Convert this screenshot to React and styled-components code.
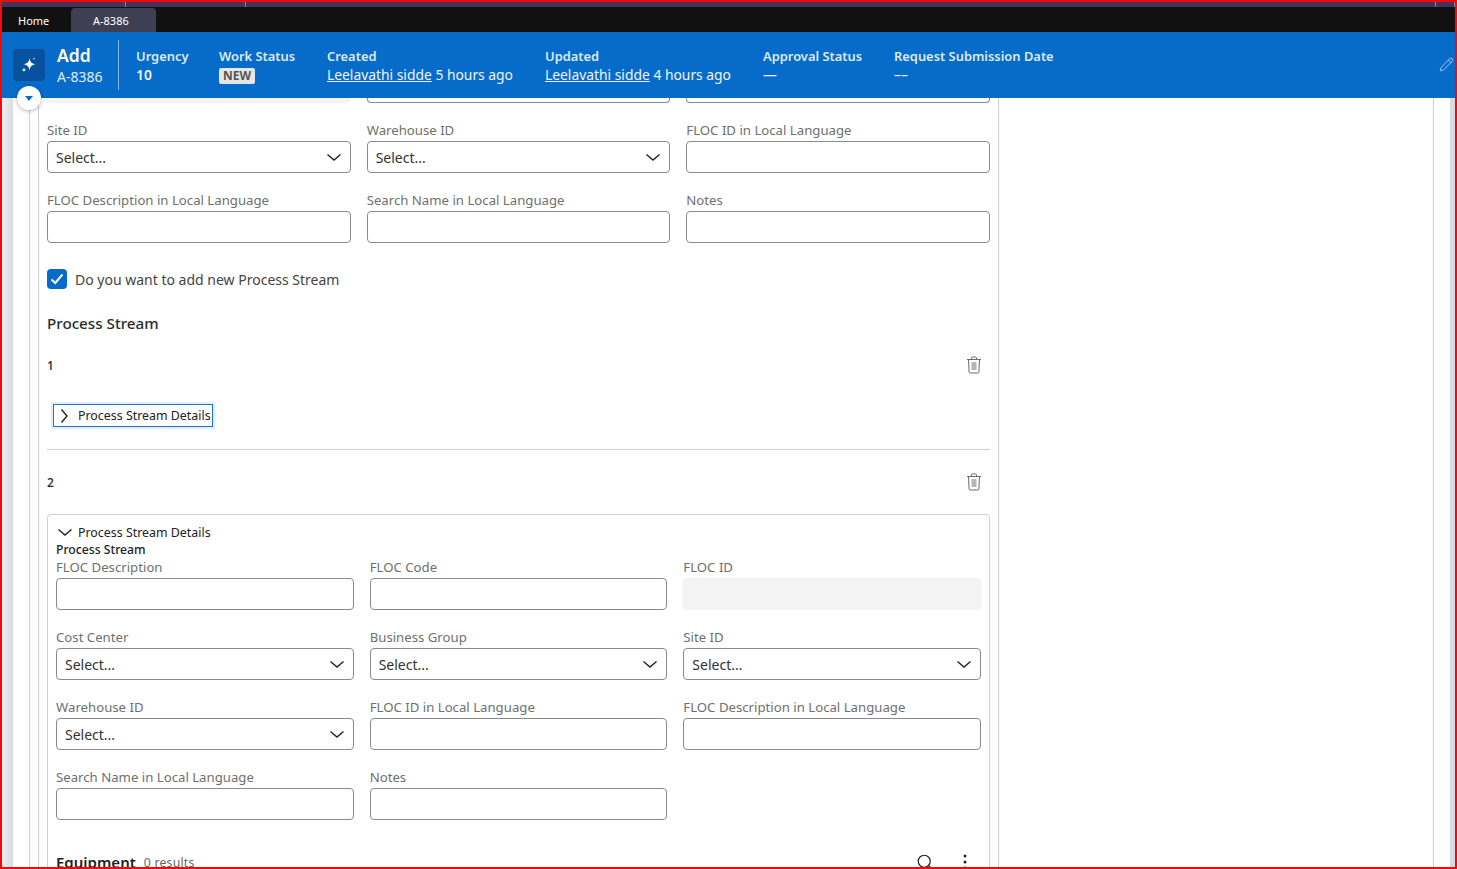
import React from 'react';
import styled, { createGlobalStyle } from 'styled-components';
import { Pencil, Search } from 'lucide-react';

const GlobalStyle = createGlobalStyle`
  html, body {
    margin: 0;
    padding: 0;
    overflow: hidden;
    background: #fff;
    font-family: "Noto Sans", "Open Sans", sans-serif;
  }
  * {
    box-sizing: border-box;
  }
`;

const Frame = styled.div`
  position: relative;
  width: 1457px;
  height: 869px;
  border: 2px solid #f00a0a;
  overflow: hidden;
  display: flex;
  flex-direction: column;
`;

const TopStrip = styled.div`
  flex: none;
  height: 5px;
  background: #43325a;
  display: flex;
  justify-content: space-between;
`;

const TickGroup = styled.div`
  display: flex;
`;

const Tick = styled.span`
  width: ${props => props.$w}px;
  border-right: 1px solid #8f8699;
`;

const TabBar = styled.div`
  flex: none;
  height: 25px;
  background: #111111;
  display: flex;
  align-items: flex-end;
  color: #fff;
  font-size: 11px;
`;

const Tab = styled.div`
  height: 24px;
  display: flex;
  align-items: center;
  width: ${props => props.$w}px;
  padding-left: ${props => props.$pl}px;
  border-radius: 4px 4px 0 0;
  background: ${props => (props.$active ? '#3f3f54' : 'transparent')};
  margin-left: ${props => props.$ml || 0}px;
`;

const Header = styled.div`
  position: relative;
  z-index: 2;
  flex: none;
  height: 66px;
  background: #076bc9;
  display: flex;
  align-items: center;
  padding-left: 11px;
  color: #fff;
`;

const IconTile = styled.div`
  width: 32px;
  height: 32px;
  border-radius: 4px;
  background: #07529f;
  display: flex;
  align-items: center;
  justify-content: center;
`;

const TitleBlock = styled.div`
  margin-left: 12px;
  width: 61px;
  display: flex;
  flex-direction: column;
`;

const Title = styled.div`
  font-size: 17.5px;
  font-weight: 600;
  line-height: 24px;
`;

const SubTitle = styled.div`
  font-size: 14px;
  line-height: 20px;
  color: #e3eefa;
`;

const Separator = styled.div`
  width: 1px;
  height: 50px;
  background: #8dbbe6;
`;

const MetaRow = styled.div`
  display: flex;
  gap: 32px;
  margin-left: 17px;
  padding-top: 2px;
`;

const Meta = styled.div`
  display: flex;
  flex-direction: column;
  white-space: nowrap;
  width: ${props => (props.$w ? `${props.$w}px` : 'auto')};
`;

const MetaLabel = styled.div`
  font-size: 12.9px;
  font-weight: 600;
  line-height: 18px;
  color: #dceafa;
`;

const MetaValue = styled.div`
  font-size: 13.85px;
  line-height: 20px;
  color: #eef5fd;
  font-weight: ${props => (props.$bold ? 600 : 400)};
`;

const UserLink = styled.span`
  text-decoration: underline;
`;

const Badge = styled.span`
  display: inline-block;
  background: #e6e6e6;
  color: #555;
  font-size: 12px;
  font-weight: 700;
  line-height: 16px;
  padding: 0 4px;
  border-radius: 2px;
`;

const EditButton = styled.div`
  position: absolute;
  right: 1px;
  top: 25px;
  color: #cfe2f6;
  display: flex;
`;

const Toggle = styled.div`
  position: absolute;
  z-index: 3;
  left: 15px;
  top: 84px;
  width: 24px;
  height: 24px;
  border-radius: 50%;
  background: #fff;
  box-shadow: 0 1px 4px rgba(0, 0, 0, 0.3);
  display: flex;
  align-items: center;
  justify-content: center;

  &::after {
    content: '';
    margin-top: 1px;
    border-left: 4px solid transparent;
    border-right: 4px solid transparent;
    border-top: 5px solid #076bc9;
  }
`;

const Page = styled.div`
  flex: 1;
  min-height: 0;
  display: flex;
  overflow: hidden;
  background: linear-gradient(90deg, #eceef1 0, #d6dce1 11px, #d6dce1 100%);
  padding: 0 5px 0 11px;
`;

const Panel = styled.div`
  flex: 1;
  background: #fff;
  padding: 0 16px;
  display: flex;
`;

const PanelInner = styled.div`
  flex: 1;
  border-left: 1px solid #cfcfcf;
  border-right: 1px solid #cfcfcf;
  padding-left: 8px;
  display: flex;
`;

const FormColumn = styled.div`
  width: 961px;
  flex: none;
  border-left: 1px solid #cfcfcf;
  border-right: 1px solid #cfcfcf;
  padding: 0 8px;
`;

const ClippedRow = styled.div`
  height: 5px;
  overflow: hidden;
  display: grid;
  grid-template-columns: repeat(3, 1fr);
  column-gap: 16px;
  align-items: end;
  margin-bottom: 17px;
`;

const ClippedField = styled.div`
  height: 5px;
  border-radius: 0 0 4px 4px;
  background: ${props => (props.$disabled ? '#f3f3f3' : '#fff')};
  border: ${props => (props.$disabled ? 'none' : '1px solid #8a8a8a')};
  border-top: none;
`;

const FieldGrid = styled.div`
  display: grid;
  grid-template-columns: repeat(3, 1fr);
  column-gap: 16px;
  row-gap: 17px;
`;

const Field = styled.div`
  display: flex;
  flex-direction: column;
  min-width: 0;
`;

const Label = styled.label`
  font-size: 13.2px;
  line-height: 20px;
  height: 21px;
  color: #6f6f6f;
  white-space: nowrap;
`;

const InputBox = styled.div`
  height: 32px;
  border-radius: 4px;
  border: ${props => (props.$disabled ? 'none' : '1px solid #8a8a8a')};
  background: ${props => (props.$disabled ? '#f3f3f3' : '#fff')};
  display: flex;
  align-items: center;
  justify-content: space-between;
  padding: 0 8px;
  font-size: 14px;
  color: #333;
`;

const CheckRow = styled.div`
  display: flex;
  align-items: center;
  gap: 8px;
  margin-top: 26px;
  font-size: 14px;
  color: #444;
`;

const CheckBox = styled.div`
  width: 20px;
  height: 20px;
  border-radius: 4px;
  background: #076bc9;
  display: flex;
  align-items: center;
  justify-content: center;
`;

const SectionTitle = styled.div`
  font-size: 15.2px;
  font-weight: 500;
  line-height: 22px;
  color: #2b2b2b;
  margin-top: 23px;
`;

const StreamRow = styled.div`
  height: 24px;
  display: flex;
  align-items: center;
  justify-content: space-between;
  padding-right: 8px;
  font-size: 12px;
  font-weight: 500;
  color: #222;
  margin-top: ${props => props.$mt}px;
`;

const DetailsButton = styled.div`
  width: 160px;
  height: 23px;
  margin: 27px 0 0 6px;
  display: flex;
  align-items: center;
  border: 1px solid #1b74d3;
  outline: 2px solid #e3eef9;
  font-size: 12.4px;
  color: #222;
  white-space: nowrap;
  padding-left: 2px;
  gap: 6px;
`;

const Divider = styled.div`
  height: 1px;
  background: #cfcfcf;
  margin-top: 22px;
`;

const DetailsCard = styled.div`
  margin-top: 20px;
  border: 1px solid #cfcfcf;
  border-radius: 4px;
  padding: 8px 8px 0;
`;

const DetailsHead = styled.div`
  display: flex;
  align-items: center;
  gap: 5px;
  height: 18px;
  font-size: 12.4px;
  color: #222;
  margin-left: 1px;
`;

const DetailsTitle = styled.div`
  font-size: 12.2px;
  line-height: 15px;
  padding-top: 1px;
  font-weight: 500;
  color: #222;
`;

const EquipmentRow = styled.div`
  display: flex;
  align-items: center;
  height: 24px;
  margin-top: 30px;
`;

const EquipmentTitle = styled.div`
  font-size: 15px;
  font-weight: 600;
  color: #222;
`;

const ResultCount = styled.div`
  font-size: 12.3px;
  color: #666;
  margin-left: 8px;
  letter-spacing: 0.2px;
`;

const EquipmentTools = styled.div`
  margin-left: auto;
  display: flex;
  align-items: center;
  gap: 29px;
  padding-right: 14px;
  color: #222;
`;

const Sparkle = () => (
  <svg width="16" height="16" viewBox="0 0 16 16" fill="#fff">
    <path d="M8.500 1.300c.6 3.700 2.200 5.400 6 6-3.800.6-5.400 2.300-6 6-.6-3.700-2.200-5.400-6-6 3.800-.6 5.400-2.300 6-6z" />
    <path d="M3 10.800c.3 1.300.7 1.800 2.100 2.100-1.400.3-1.800.8-2.100 2.200-.3-1.400-.7-1.900-2.100-2.200 1.400-.3 1.800-.8 2.100-2.100z" />
    <path d="M13 .4c.1.800.5 1.200 1.300 1.300-.8.1-1.200.5-1.300 1.300-.1-.8-.5-1.200-1.300-1.300.8-.1 1.200-.5 1.300-1.300z" />
  </svg>
);

const TrashIcon = () => (
  <svg width="16" height="18" viewBox="0 0 16 18" fill="none" stroke="#6a6a6a" strokeWidth="1">
    <path d="M1 3.500h14M2.500 3.500l.6 12.500c0 .6.4 1 1 1h7.800c.6 0 1-.4 1-1l.6-12.500" />
    <path d="M5.500 3.500V2c0-.5.4-1 1-1h3c.6 0 1 .5 1 1v1.500" />
    <rect x="5.500" y="6" width="5" height="8" fill="#b5b5b5" stroke="none" />
  </svg>
);

const DotsIcon = () => (
  <svg width="4" height="16" viewBox="0 0 4 16" fill="#222">
    <circle cx="2" cy="2" r="1.500" />
    <circle cx="2" cy="8" r="1.500" />
    <circle cx="2" cy="14" r="1.500" />
  </svg>
);

const ChevronSvg = styled.svg`
  flex: none;
  transform: rotate(${props => (props.$right ? -90 : 0)}deg);
`;

const Chevron = ({ right }) => (
  <ChevronSvg $right={right} width="16" height="16" viewBox="0 0 16 16" fill="none" stroke="#222" strokeWidth="1.400">
    <path d="M1.500 5.500L8 11l6.500-5.500" />
  </ChevronSvg>
);

const TextField = ({ label, disabled }) => (
  <Field>
    <Label>{label}</Label>
    <InputBox $disabled={disabled} />
  </Field>
);

const SelectField = ({ label }) => (
  <Field>
    <Label>{label}</Label>
    <InputBox>
      Select...
      <Chevron />
    </InputBox>
  </Field>
);

const metaItems = [
  { label: 'Created', user: 'Leelavathi sidde', when: ' 5 hours ago' },
  { label: 'Updated', user: 'Leelavathi sidde', when: ' 4 hours ago' },
];

export default function App() {
  return (
    <>
      <GlobalStyle />
      <Frame>
        <TopStrip>
          <TickGroup>
            <Tick $w={124} />
            <Tick $w={120} />
          </TickGroup>
          <TickGroup>
            <Tick $w={85} />
            <Tick $w={19} />
          </TickGroup>
        </TopStrip>
        <TabBar>
          <Tab $w={62} $pl={16}>Home</Tab>
          <Tab $w={85} $pl={22} $ml={7} $active>A-8386</Tab>
        </TabBar>
        <Header>
          <IconTile>
            <Sparkle />
          </IconTile>
          <TitleBlock>
            <Title>Add</Title>
            <SubTitle>A-8386</SubTitle>
          </TitleBlock>
          <Separator />
          <MetaRow>
            <Meta $w={51}>
              <MetaLabel>Urgency</MetaLabel>
              <MetaValue $bold>10</MetaValue>
            </Meta>
            <Meta $w={76}>
              <MetaLabel>Work Status</MetaLabel>
              <MetaValue><Badge>NEW</Badge></MetaValue>
            </Meta>
            {metaItems.map((item) => (
              <Meta key={item.label} $w={186}>
                <MetaLabel>{item.label}</MetaLabel>
                <MetaValue>
                  <UserLink>{item.user}</UserLink>
                  {item.when}
                </MetaValue>
              </Meta>
            ))}
            <Meta $w={99}>
              <MetaLabel>Approval Status</MetaLabel>
              <MetaValue>—</MetaValue>
            </Meta>
            <Meta>
              <MetaLabel>Request Submission Date</MetaLabel>
              <MetaValue>––</MetaValue>
            </Meta>
          </MetaRow>
          <EditButton>
            <Pencil size={15} strokeWidth={1.2} />
          </EditButton>
        </Header>
        <Toggle />
        <Page>
          <Panel>
            <PanelInner>
              <FormColumn>
                <ClippedRow>
                  <ClippedField $disabled />
                  <ClippedField />
                  <ClippedField />
                </ClippedRow>
                <FieldGrid>
                  <SelectField label="Site ID" />
                  <SelectField label="Warehouse ID" />
                  <TextField label="FLOC ID in Local Language" />
                  <TextField label="FLOC Description in Local Language" />
                  <TextField label="Search Name in Local Language" />
                  <TextField label="Notes" />
                </FieldGrid>
                <CheckRow>
                  <CheckBox>
                    <svg width="14" height="12" viewBox="0 0 14 12" fill="none" stroke="#fff" strokeWidth="2">
                      <path d="M1.500 6.500l3.700 3.500 7.300-8.500" />
                    </svg>
                  </CheckBox>
                  Do you want to add new Process Stream
                </CheckRow>
                <SectionTitle>Process Stream</SectionTitle>
                <StreamRow $mt={19}>
                  1
                  <TrashIcon />
                </StreamRow>
                <DetailsButton>
                  <Chevron right />
                  Process Stream Details
                </DetailsButton>
                <Divider />
                <StreamRow $mt={20}>
                  2
                  <TrashIcon />
                </StreamRow>
                <DetailsCard>
                  <DetailsHead>
                    <Chevron />
                    Process Stream Details
                  </DetailsHead>
                  <DetailsTitle>Process Stream</DetailsTitle>
                  <FieldGrid>
                    <TextField label="FLOC Description" />
                    <TextField label="FLOC Code" />
                    <TextField label="FLOC ID" disabled />
                    <SelectField label="Cost Center" />
                    <SelectField label="Business Group" />
                    <SelectField label="Site ID" />
                    <SelectField label="Warehouse ID" />
                    <TextField label="FLOC ID in Local Language" />
                    <TextField label="FLOC Description in Local Language" />
                    <TextField label="Search Name in Local Language" />
                    <TextField label="Notes" />
                  </FieldGrid>
                  <EquipmentRow>
                    <EquipmentTitle>Equipment</EquipmentTitle>
                    <ResultCount>0 results</ResultCount>
                    <EquipmentTools>
                      <Search size={18} strokeWidth={1.6} />
                      <DotsIcon />
                    </EquipmentTools>
                  </EquipmentRow>
                </DetailsCard>
              </FormColumn>
            </PanelInner>
          </Panel>
        </Page>
      </Frame>
    </>
  );
}
